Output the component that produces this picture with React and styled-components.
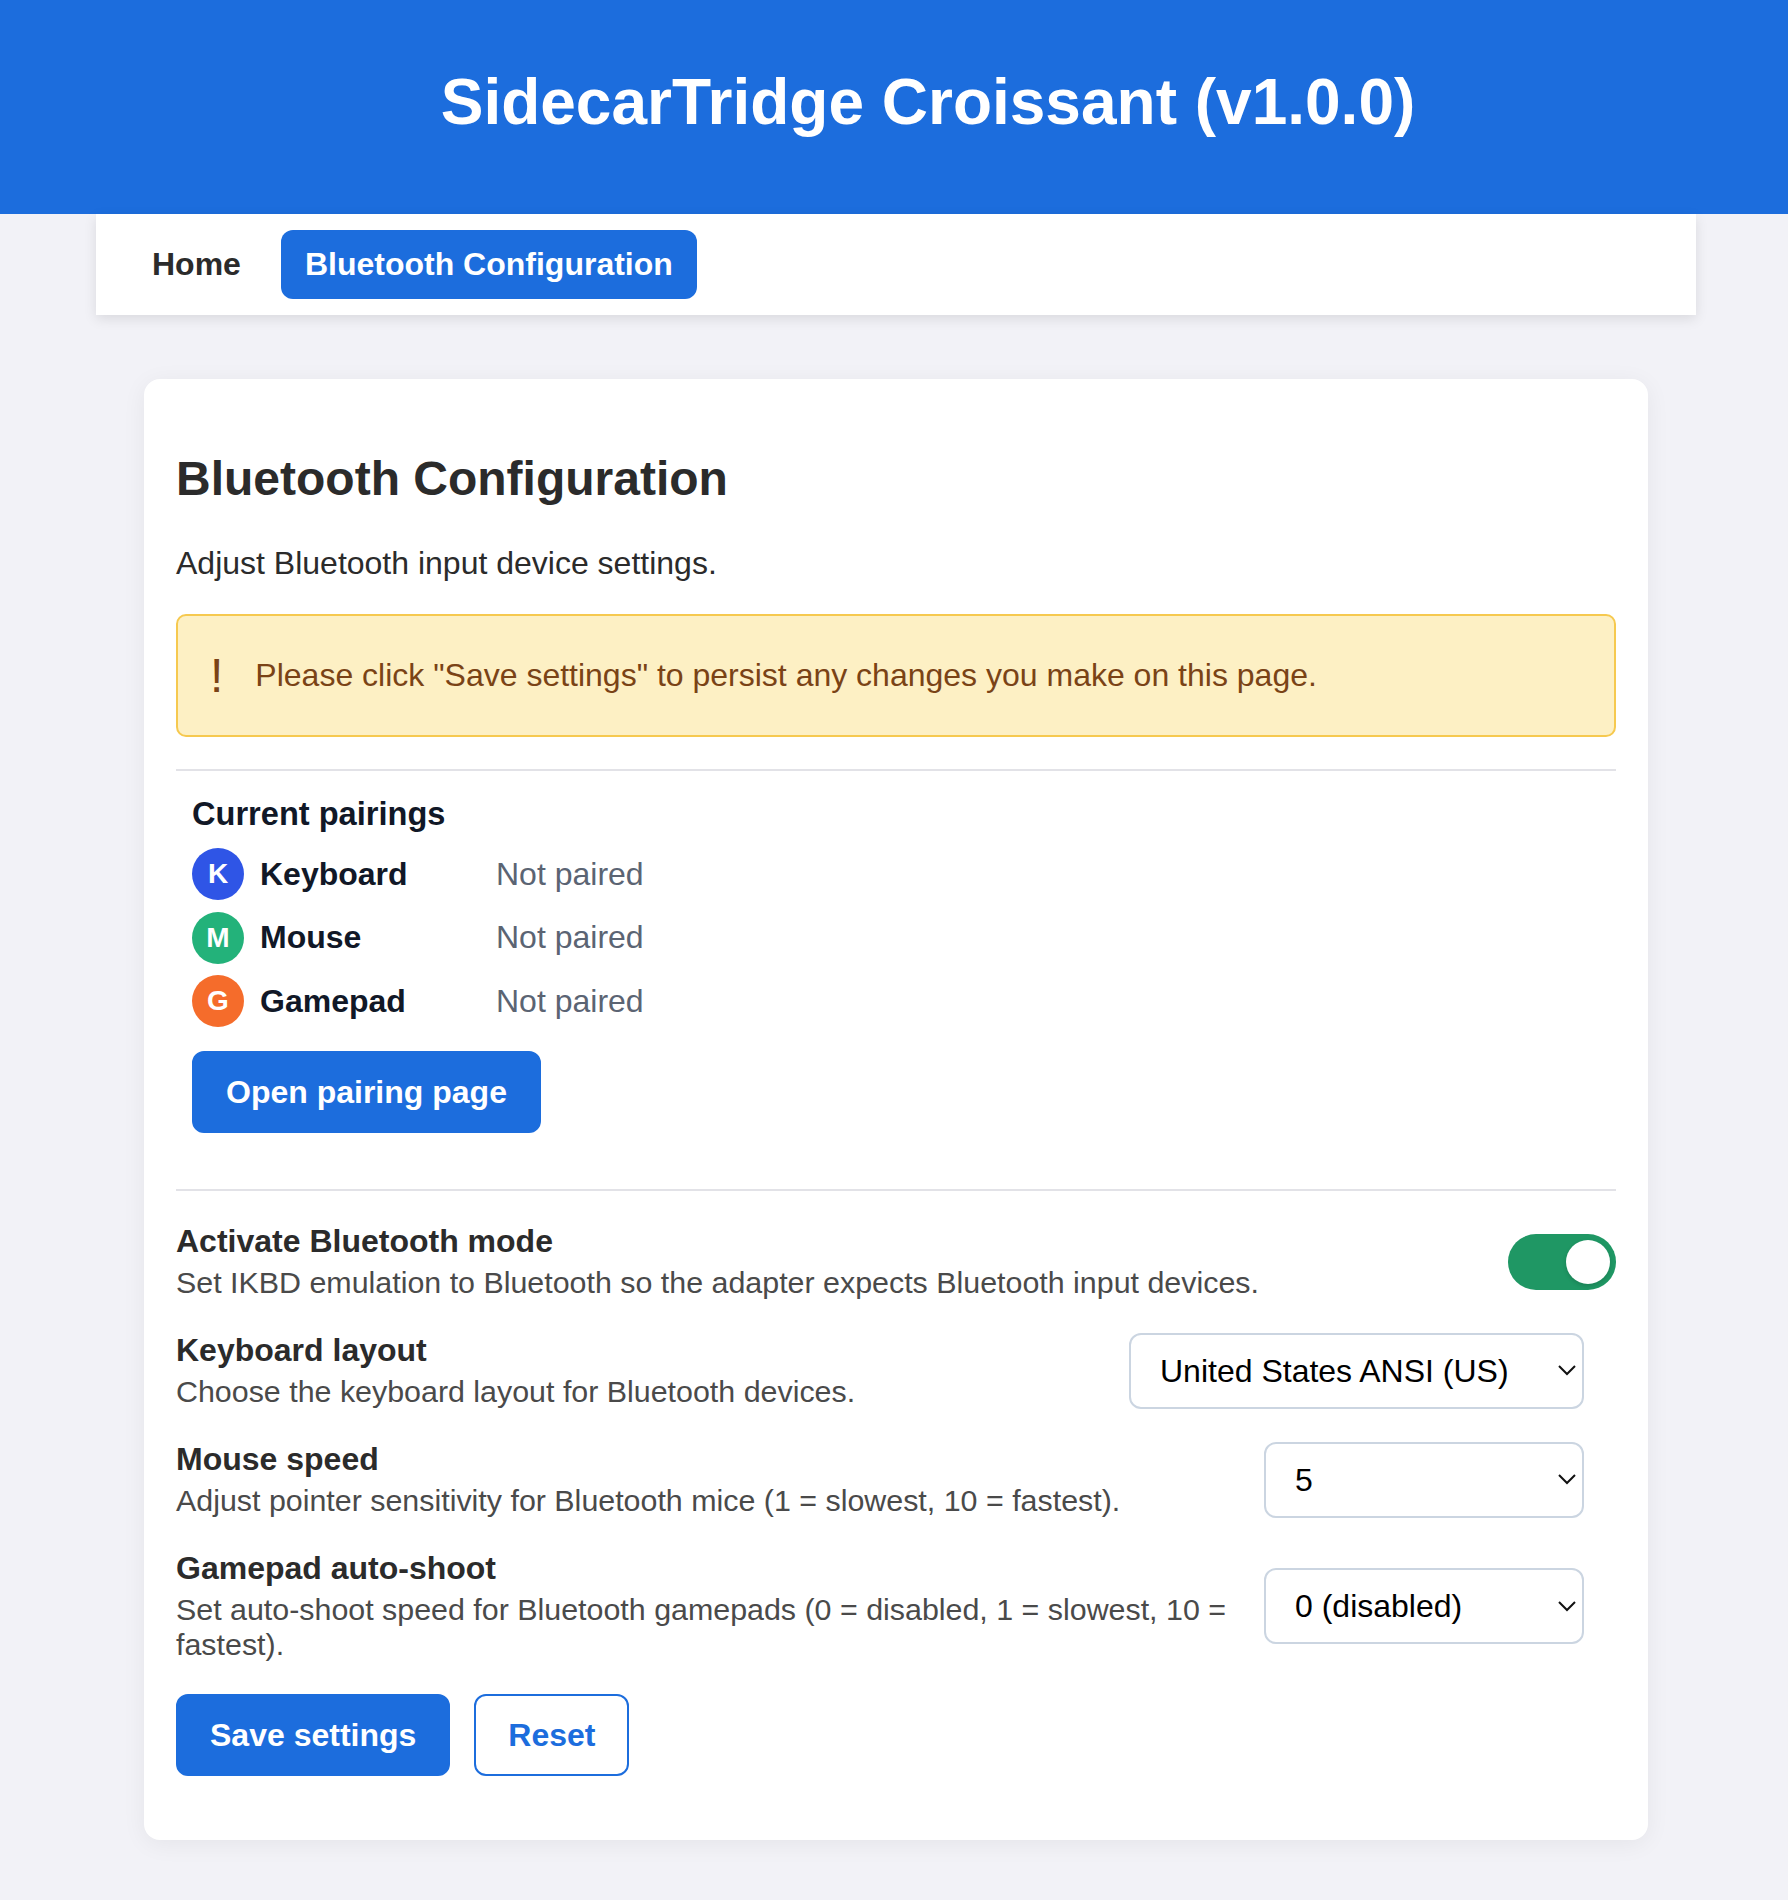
import React from 'react';
import styled, { createGlobalStyle } from 'styled-components';

const GlobalStyle = createGlobalStyle`
  html, body {
    margin: 0;
    background: #f2f2f7;
    font-family: "Liberation Sans", Arial, sans-serif;
    color: #333;
  }
  * { box-sizing: border-box; }
`;

const Header = styled.header`
  background: #1c6ddd;
  height: 214px;
  padding: 0 0 10px 68px;
  display: flex;
  align-items: center;
  justify-content: center;
`;

const PageTitle = styled.h1`
  margin: 0;
  font-size: 64px;
  font-weight: 700;
  color: #fff;
`;

const Shell = styled.div`
  padding: 0 92px 61px 96px;
`;

const Nav = styled.nav`
  background: #fff;
  padding: 16px 32px;
  display: flex;
  gap: 16px;
  box-shadow: 0 4px 12px rgba(0, 0, 0, 0.1);
`;

const NavLink = styled.a`
  padding: 16px 24px;
  border-radius: 12px;
  font-size: 32px;
  font-weight: 700;
  color: ${(p) => (p.$active ? '#fff' : '#2b2b2b')};
  background: ${(p) => (p.$active ? '#1c6ddd' : 'transparent')};
`;

const Card = styled.main`
  margin: 64px 48px 0;
  padding: 32px;
  background: #fff;
  border-radius: 16px;
  box-shadow: 0 4px 24px rgba(0, 0, 0, 0.06);
`;

const SectionTitle = styled.h2`
  margin: 40px 0 39px;
  font-size: 48px;
  font-weight: 700;
  color: #2b2b2b;
`;

const Intro = styled.p`
  margin: 0 0 32px;
  font-size: 32px;
  color: #2b2b2b;
`;

const Alert = styled.div`
  display: flex;
  align-items: center;
  gap: 32px;
  padding: 32px;
  background: #fdf0c4;
  border: 2px solid #f6c94f;
  border-radius: 10px;
  color: #7a4316;
  font-size: 32px;
`;

const AlertMark = styled.span`
  font-size: 48px;
`;

const Divider = styled.hr`
  margin: 32px 0 0;
  border: 0;
  height: 2px;
  background: #e2e2e7;
`;

const Pairings = styled.section`
  padding: 24px 16px;
  margin-bottom: 32px;
`;

const PairingsTitle = styled.div`
  font-size: 32.6px;
  font-weight: 700;
  color: #111827;
  margin-bottom: 15px;
`;

const PairingList = styled.div`
  display: flex;
  flex-direction: column;
  gap: 11.5px;
  margin-bottom: 24px;
`;

const PairingRow = styled.div`
  display: flex;
  align-items: center;
  font-size: 32px;
`;

const DeviceBadge = styled.span`
  width: 52px;
  height: 52px;
  margin-right: 16px;
  border-radius: 50%;
  display: flex;
  align-items: center;
  justify-content: center;
  background: ${(p) => p.$color};
  color: #fff;
  font-size: 28px;
  font-weight: 700;
`;

const DeviceName = styled.span`
  width: 236px;
  font-weight: 700;
  color: #111827;
`;

const DeviceStatus = styled.span`
  color: #5b6473;
`;

const Button = styled.button`
  height: 82px;
  padding: 0 32px;
  border: 2px solid #1c6ddd;
  border-radius: 12px;
  font-family: inherit;
  font-size: 32px;
  font-weight: 700;
  color: ${(p) => (p.$outline ? '#1c6ddd' : '#fff')};
  background: ${(p) => (p.$outline ? '#fff' : '#1c6ddd')};
`;

const SettingRow = styled.div`
  display: flex;
  align-items: center;
  justify-content: space-between;
  gap: 38px;
  margin-top: 32px;
`;

const SettingText = styled.div`
  flex: 1;
  min-width: 0;
`;

const SettingLabel = styled.div`
  font-size: 32px;
  font-weight: 700;
  color: #2b2b2b;
  margin-bottom: 5px;
`;

const SettingHint = styled.div`
  font-size: 30.4px;
  color: #4a4a4a;
`;

const Toggle = styled.span`
  width: 108px;
  height: 56px;
  padding: 6px;
  border-radius: 28px;
  background: #1f9764;
  display: flex;
  justify-content: flex-end;
  flex: none;
`;

const ToggleKnob = styled.span`
  width: 44px;
  height: 44px;
  border-radius: 50%;
  background: #fff;
  box-shadow: 0 2px 4px rgba(0, 0, 0, 0.15);
`;

const chevron =
  "data:image/svg+xml,%3Csvg xmlns='http://www.w3.org/2000/svg' width='18' height='11' viewBox='0 0 18 11'%3E%3Cpath d='M1 1l8 8 8-8' fill='none' stroke='%23111' stroke-width='2'/%3E%3C/svg%3E";

const Select = styled.select`
  appearance: none;
  flex: none;
  width: ${(p) => p.$width}px;
  height: 76px;
  margin-right: 32px;
  padding: 0 29px;
  border: 2px solid #cbd5e1;
  border-radius: 12px;
  font-family: inherit;
  font-size: 32px;
  color: #000;
  background: #fff url("${chevron}") no-repeat right 6px center;
`;

const Actions = styled.div`
  display: flex;
  gap: 24px;
  margin-top: 32px;
  margin-bottom: 32px;
`;

const devices = [
  { letter: 'K', name: 'Keyboard', color: '#2f55e6' },
  { letter: 'M', name: 'Mouse', color: '#23b27a' },
  { letter: 'G', name: 'Gamepad', color: '#f56c2b' },
];

const speeds = ['1', '2', '3', '4', '5', '6', '7', '8', '9', '10'];

const App = () => (
  <>
    <GlobalStyle />
    <Header>
      <PageTitle>SidecarTridge Croissant (v1.0.0)</PageTitle>
    </Header>
    <Shell>
      <Nav>
        <NavLink>Home</NavLink>
        <NavLink $active>Bluetooth Configuration</NavLink>
      </Nav>
      <Card>
        <SectionTitle>Bluetooth Configuration</SectionTitle>
        <Intro>Adjust Bluetooth input device settings.</Intro>
        <Alert>
          <AlertMark>!</AlertMark>
          Please click "Save settings" to persist any changes you make on this page.
        </Alert>
        <Divider />
        <Pairings>
          <PairingsTitle>Current pairings</PairingsTitle>
          <PairingList>
            {devices.map((device) => (
              <PairingRow key={device.name}>
                <DeviceBadge $color={device.color}>{device.letter}</DeviceBadge>
                <DeviceName>{device.name}</DeviceName>
                <DeviceStatus>Not paired</DeviceStatus>
              </PairingRow>
            ))}
          </PairingList>
          <Button>Open pairing page</Button>
        </Pairings>
        <Divider />
        <SettingRow>
          <SettingText>
            <SettingLabel>Activate Bluetooth mode</SettingLabel>
            <SettingHint>Set IKBD emulation to Bluetooth so the adapter expects Bluetooth input devices.</SettingHint>
          </SettingText>
          <Toggle>
            <ToggleKnob />
          </Toggle>
        </SettingRow>
        <SettingRow>
          <SettingText>
            <SettingLabel>Keyboard layout</SettingLabel>
            <SettingHint>Choose the keyboard layout for Bluetooth devices.</SettingHint>
          </SettingText>
          <Select $width={455} defaultValue="us">
            <option value="us">United States ANSI (US)</option>
          </Select>
        </SettingRow>
        <SettingRow>
          <SettingText>
            <SettingLabel>Mouse speed</SettingLabel>
            <SettingHint>Adjust pointer sensitivity for Bluetooth mice (1 = slowest, 10 = fastest).</SettingHint>
          </SettingText>
          <Select $width={320} defaultValue="5">
            {speeds.map((speed) => (
              <option key={speed} value={speed}>{speed}</option>
            ))}
          </Select>
        </SettingRow>
        <SettingRow>
          <SettingText>
            <SettingLabel>Gamepad auto-shoot</SettingLabel>
            <SettingHint>Set auto-shoot speed for Bluetooth gamepads (0 = disabled, 1 = slowest, 10 = fastest).</SettingHint>
          </SettingText>
          <Select $width={320} defaultValue="0">
            <option value="0">0 (disabled)</option>
            {speeds.map((speed) => (
              <option key={speed} value={speed}>{speed}</option>
            ))}
          </Select>
        </SettingRow>
        <Actions>
          <Button>Save settings</Button>
          <Button $outline>Reset</Button>
        </Actions>
      </Card>
    </Shell>
  </>
);

export default App;
